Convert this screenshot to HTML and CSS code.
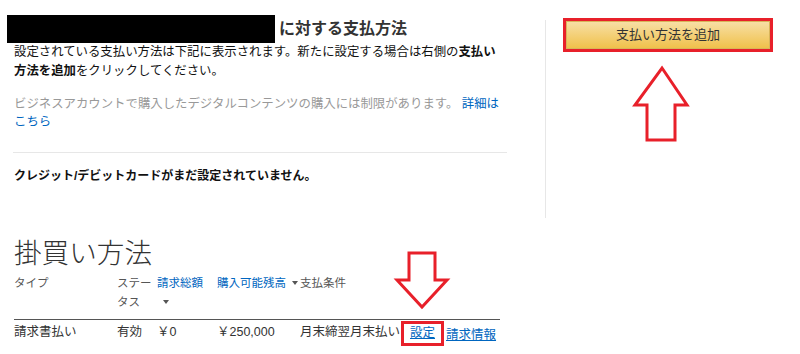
FILE: index.html
```html
<!DOCTYPE html>
<html lang="ja">
<head>
<meta charset="utf-8">
<link rel="stylesheet" href="styles.css">
</head>
<body>
<div class="page">
  <section class="top">
    <div class="left">
      <div class="title-row">
        <span class="redacted"></span>
        <h1 class="title">に対する支払方法</h1>
      </div>
      <p class="intro">設定されている支払い方法は下記に表示されます。新たに設定する場合は右側の<b>支払い</b><br><b>方法を追加</b>をクリックしてください。</p>
      <p class="note">ビジネスアカウントで購入したデジタルコンテンツの購入には制限があります。 <a class="link" href="#">詳細は</a><br><a class="link" href="#">こちら</a></p>
      <hr class="divider">
      <p class="empty">クレジット/デビットカードがまだ設定されていません。</p>
    </div>
    <aside class="right">
      <div class="btn-frame">
        <button class="btn">支払い方法を追加</button>
      </div>
    </aside>
  </section>

  <section class="credit">
    <h2 class="credit-title">掛買い方法</h2>
    <div class="grid head">
      <div class="c1">タイプ</div>
      <div class="c2">ステータス</div>
      <div class="c3 blue">請求総額<span class="caret"></span></div>
      <div class="c4 blue">購入可能残高<span class="caret"></span></div>
      <div class="c5">支払条件</div>
      <div class="c6"></div>
    </div>
    <div class="grid row">
      <div class="c1">請求書払い</div>
      <div class="c2">有効</div>
      <div class="c3">￥0</div>
      <div class="c4">￥250,000</div>
      <div class="c5 clip">月末締翌月末払い</div>
      <div class="c6"><a class="link u boxed" href="#">設定</a><a class="link u" href="#">請求情報</a></div>
    </div>
  </section>

  <svg class="arrow" width="800" height="354" viewBox="0 0 800 354">
    <polygon points="662,68 687,105 675,105 675,140 647,140 647,105 635,105" fill="#fff" stroke="#e8202a" stroke-width="3" stroke-linejoin="miter"/>
  </svg>
  <svg class="arrow" width="800" height="354" viewBox="0 0 800 354">
    <polygon points="409,253 435,253 435,280 447,280 422,307 397,280 409,280" fill="#fff" stroke="#e8202a" stroke-width="3" stroke-linejoin="miter"/>
  </svg>
</div>
</body>
</html>
```
FILE: styles.css
```css
html, body {
  margin: 0;
  padding: 0;
  background: #fff;
}
body {
  font-family: "Liberation Sans", "Noto Sans CJK JP", sans-serif;
  color: #111;
  width: 800px;
  height: 354px;
  overflow: hidden;
}
.page {
  position: relative;
  width: 800px;
  height: 354px;
}
.top {
  display: flex;
  height: 218px;
}
.left {
  width: 493px;
  padding-left: 14px;
  padding-top: 15px;
}
.title-row {
  display: flex;
  align-items: center;
  height: 28px;
  margin-left: -7px;
}
.redacted {
  display: block;
  width: 268px;
  height: 28px;
  background: #000;
}
.title {
  margin: 0 0 0 4px;
  font-size: 16px;
  line-height: 28px;
  font-weight: bold;
  color: #333;
}
.intro {
  margin: 0;
  font-size: 12.4px;
  line-height: 19px;
  color: #111;
}
.intro b {
  font-weight: bold;
}
.note {
  margin: 15px 0 0;
  font-size: 12.4px;
  line-height: 17.5px;
  color: #999;
}
.link {
  color: #0066c0;
  text-decoration: none;
}
.link.u {
  text-decoration: underline;
}
.divider {
  margin: 21px 0 0 -1px;
  border: 0;
  border-top: 1px solid #e7e7e7;
  height: 0;
}
.empty {
  margin: 14px 0 0;
  font-size: 12px;
  line-height: 18px;
  font-weight: bold;
  color: #111;
}
.right {
  margin-left: 38px;
  margin-top: 20px;
  border-left: 1px solid #e7e7e7;
  padding-left: 17px;
}
.btn-frame {
  margin-top: -2px;
  width: 204px;
  height: 28px;
  border: 3px solid #e8202a;
  display: flex;
}
.btn {
  flex: 1;
  margin: 0;
  border: 1px solid #d8b55a;
  background: linear-gradient(to bottom, #f7dfa5, #f0c14b);
  font-family: "Liberation Sans", "Noto Sans CJK JP", sans-serif;
  font-size: 13px;
  color: #333;
  padding: 0;
  line-height: 26px;
}
.credit {
  padding-left: 14px;
}
.credit-title {
  margin: 20px 0 0;
  font-size: 27.6px;
  line-height: 32px;
  font-weight: 300;
  color: #333;
}
.grid {
  display: grid;
  grid-template-columns: 103px 40px 60px 83px 101px auto;
  width: 486px;
}
.head {
  margin-top: 3.5px;
  font-size: 11.5px;
  line-height: 19px;
  color: #555;
  padding-bottom: 7px;
  border-bottom: 1px solid #555;
}
.head .c3 {
  padding-right: 8px;
}
.blue {
  color: #0066c0;
}
.caret {
  display: inline-block;
  width: 0;
  height: 0;
  margin-left: 6px;
  border-left: 3px solid transparent;
  border-right: 3px solid transparent;
  border-top: 4px solid #555;
  vertical-align: middle;
}
.row {
  padding-top: 3px;
  font-size: 12.5px;
  line-height: 19px;
  color: #333;
}
.clip {
  white-space: nowrap;
  overflow: hidden;
}
.c6 {
  white-space: nowrap;
}
.boxed {
  display: inline-block;
  position: relative;
  top: -2px;
  border: 3px solid #e8202a;
  padding: 0 6px;
  margin-right: 2px;
  line-height: 19px;
}
.arrow {
  position: absolute;
  left: 0;
  top: 0;
  pointer-events: none;
}
```
